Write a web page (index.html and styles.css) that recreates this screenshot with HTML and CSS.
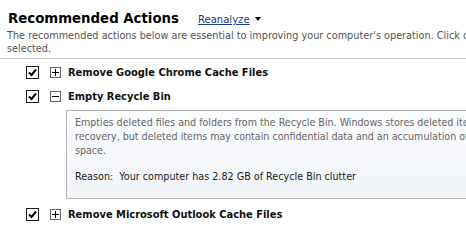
FILE: index.html
```html
<!DOCTYPE html>
<html>
<head>
<meta charset="utf-8">
<link rel="stylesheet" href="styles.css">
</head>
<body>
<div class="page">
  <div class="header">
    <h1 class="title">Recommended Actions</h1>
    <a class="reanalyze" href="#">Reanalyze</a><span class="caret"></span>
  </div>
  <p class="desc"><span class="line">The recommended actions below are essential to improving your computer's operation. Click on a</span><span class="line">selected.</span></p>
  <div class="rule"></div>
  <div class="items">
    <div class="item">
      <span class="check"><svg width="9" height="9" viewBox="0 0 9 9"><path d="M1 4.5 L3.5 7 L8 1.5" fill="none" stroke="#000" stroke-width="2"/></svg></span>
      <span class="toggle"><svg width="7" height="7" viewBox="0 0 7 7"><path d="M0 3.5 H7 M3.5 0 V7" stroke="#000" stroke-width="1"/></svg></span>
      <span class="label">Remove Google Chrome Cache Files</span>
    </div>
    <div class="item">
      <span class="check"><svg width="9" height="9" viewBox="0 0 9 9"><path d="M1 4.5 L3.5 7 L8 1.5" fill="none" stroke="#000" stroke-width="2"/></svg></span>
      <span class="toggle"><svg width="7" height="7" viewBox="0 0 7 7"><path d="M0 3.5 H7" stroke="#000" stroke-width="1"/></svg></span>
      <span class="label">Empty Recycle Bin</span>
    </div>
    <div class="detail">
      <p class="detail-text"><span class="line">Empties deleted files and folders from the Recycle Bin. Windows stores deleted items for</span><span class="line">recovery, but deleted items may contain confidential data and an accumulation of</span><span class="line">space.</span></p>
      <p class="reason">Reason:&nbsp; Your computer has 2.82 GB of Recycle Bin clutter</p>
    </div>
    <div class="item">
      <span class="check"><svg width="9" height="9" viewBox="0 0 9 9"><path d="M1 4.5 L3.5 7 L8 1.5" fill="none" stroke="#000" stroke-width="2"/></svg></span>
      <span class="toggle"><svg width="7" height="7" viewBox="0 0 7 7"><path d="M0 3.5 H7 M3.5 0 V7" stroke="#000" stroke-width="1"/></svg></span>
      <span class="label">Remove Microsoft Outlook Cache Files</span>
    </div>
  </div>
</div>
</body>
</html>
```
FILE: styles.css
```css
html, body { margin: 0; padding: 0; background: #fff; overflow: hidden; }
body { width: 466px; height: 226px; font-family: "DejaVu Sans Condensed", "DejaVu Sans", sans-serif; }
.page { width: 466px; overflow: hidden; }
.header { display: flex; align-items: baseline; padding: 8px 0 0 8px; height: 19px; }
.title { margin: 0; font-size: 14.8px; font-weight: bold; color: #000; line-height: 19px; }
.reanalyze { margin-left: 19px; font-size: 11.2px; color: #1c3d8c; text-decoration: underline; }
.caret { display: inline-block; width: 0; height: 0; border-left: 3px solid transparent; border-right: 3px solid transparent; border-top: 4px solid #000; margin-left: 5px; position: relative; top: -2px; }
.line { display: block; white-space: nowrap; }
.desc { margin: 2px 0 0 7px; font-size: 10.8px; line-height: 13px; color: #555; }
.rule { margin-top: 3px; height: 1px; background: #c8c8c8; }
.items { padding-left: 26px; padding-top: 1px; }
.item { display: flex; align-items: center; height: 24px; }
.check { width: 11px; height: 11px; border: 1px solid #1c1c1c; display: flex; align-items: center; justify-content: center; }
.toggle { margin-left: 11px; width: 9px; height: 9px; border: 1px solid #666; display: flex; align-items: center; justify-content: center; }
.label { margin-left: 7px; font-size: 11px; font-weight: bold; color: #111; }
.detail { margin: 2px 0 3px 40px; border: 1px solid #b4b4b4; border-right: none; background: linear-gradient(#fbfcfd, #f1f4f8); padding: 4px 0 14px 8px; overflow: hidden; }
.detail-text { margin: 0; font-size: 10.6px; line-height: 14px; color: #666; }
.reason { margin: 13px 0 0 0; font-size: 10.7px; color: #222; line-height: 14px; white-space: nowrap; }
```
